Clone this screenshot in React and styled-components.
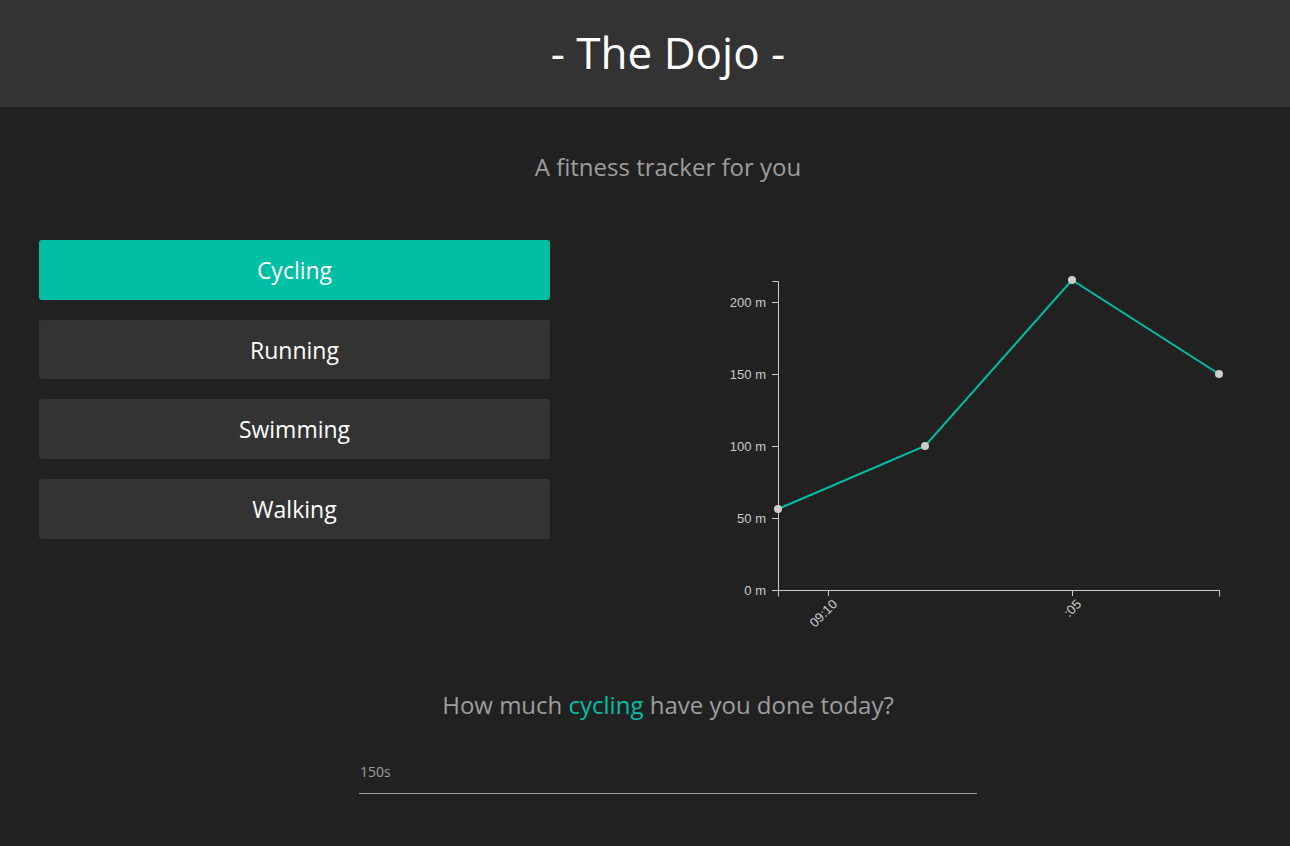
import React from 'react';
import styled, { createGlobalStyle } from 'styled-components';

const GlobalStyle = createGlobalStyle`
  html, body {
    margin: 0;
    padding: 0;
    background: #212121;
    font-family: "Open Sans", "Noto Sans", sans-serif;
    overflow-x: hidden;
  }
`;

const Page = styled.div`
  width: 1336px;
  min-height: 846px;
  background: #212121;
  color: #fff;
`;

const Header = styled.header`
  height: 107px;
  background: #333333;
  display: flex;
  align-items: center;
  justify-content: center;
`;

const Title = styled.h1`
  margin: 0 0 4px;
  font-size: 44px;
  font-weight: 400;
  color: #fff;
`;

const Subtitle = styled.h2`
  margin: 43px 0 0;
  text-align: center;
  font-size: 24px;
  font-weight: 400;
  color: #9e9e9e;
`;

const Row = styled.div`
  display: grid;
  grid-template-columns: 511px 1fr;
  padding: 0 39px;
  margin-top: 57px;
`;

const ActivityList = styled.div`
  display: flex;
  flex-direction: column;
  gap: 20px;
`;

const ActivityButton = styled.button`
  height: 59.7px;
  border: none;
  border-radius: 3px;
  background: ${(props) => (props.active ? '#00bfa5' : '#333333')};
  color: #fff;
  font-family: inherit;
  font-size: 23px;
  cursor: pointer;
`;

const ChartWrapper = styled.div`
  padding: 20px 0 0 130px;
`;

const Prompt = styled.p`
  margin: 48px 0 0;
  text-align: center;
  font-size: 24px;
  color: #9e9e9e;

  span {
    color: #00bfa5;
  }
`;

const Form = styled.form`
  width: 618px;
  margin: 39px auto 0;
`;

const Input = styled.input`
  width: 100%;
  box-sizing: border-box;
  background: transparent;
  border: none;
  border-bottom: 1px solid #9e9e9e;
  padding: 0 0 12px 1px;
  font-family: inherit;
  font-size: 14px;
  color: #fff;
  outline: none;

  &::placeholder {
    color: #9e9e9e;
  }
`;

const activities = ['Cycling', 'Running', 'Swimming', 'Walking'];

const points = [
  [98, 249],
  [245, 186],
  [392, 20],
  [539, 114],
];

const yTicks = [
  { y: 42, label: '200 m' },
  { y: 114, label: '150 m' },
  { y: 186, label: '100 m' },
  { y: 258, label: '50 m' },
  { y: 330, label: '0 m' },
];

const xTicks = [
  { x: 98 },
  { x: 148, label: '09:10' },
  { x: 392, label: ':05' },
  { x: 539 },
];

const Chart = () => (
  <svg width="570" height="380" style={{ display: 'block' }}>
    <g stroke="#ccc" fill="none" strokeWidth="1">
      <path d="M92.5,21.5H98.5V330.5H92.5" />
      <path d="M98.5,336.5V330.5H539.5V336.5" />
      {yTicks.map((t) => (
        <line key={t.label} x1="92" x2="98" y1={t.y + 0.5} y2={t.y + 0.5} />
      ))}
      {xTicks.map((t) => (
        <line key={t.x} x1={t.x + 0.5} x2={t.x + 0.5} y1="330" y2="336" />
      ))}
    </g>
    <g fill="#ccc" fontFamily="'Liberation Sans', Arial, sans-serif" fontSize="13">
      {yTicks.map((t) => (
        <text key={t.label} x="86" y={t.y + 5} textAnchor="end">
          {t.label}
        </text>
      ))}
      {xTicks
        .filter((t) => t.label)
        .map((t) => (
          <text
            key={t.label}
            textAnchor="end"
            transform={`translate(${t.x + 10}, 345) rotate(-45)`}
          >
            {t.label}
          </text>
        ))}
    </g>
    <polyline
      points={points.map((p) => p.join(',')).join(' ')}
      fill="none"
      stroke="#00bfa5"
      strokeWidth="2"
    />
    {points.map(([x, y]) => (
      <circle key={x} cx={x} cy={y} r="4" fill="#ccc" />
    ))}
  </svg>
);

const App = () => {
  const [active, setActive] = React.useState('Cycling');

  return (
    <>
      <GlobalStyle />
      <Page>
        <Header>
          <Title>- The Dojo -</Title>
        </Header>
        <Subtitle>A fitness tracker for you</Subtitle>
        <Row>
          <ActivityList>
            {activities.map((a) => (
              <ActivityButton key={a} active={a === active} onClick={() => setActive(a)}>
                {a}
              </ActivityButton>
            ))}
          </ActivityList>
          <ChartWrapper>
            <Chart />
          </ChartWrapper>
        </Row>
        <Prompt>
          How much <span>{active.toLowerCase()}</span> have you done today?
        </Prompt>
        <Form onSubmit={(e) => e.preventDefault()}>
          <Input placeholder="150s" />
        </Form>
      </Page>
    </>
  );
};

export default App;
